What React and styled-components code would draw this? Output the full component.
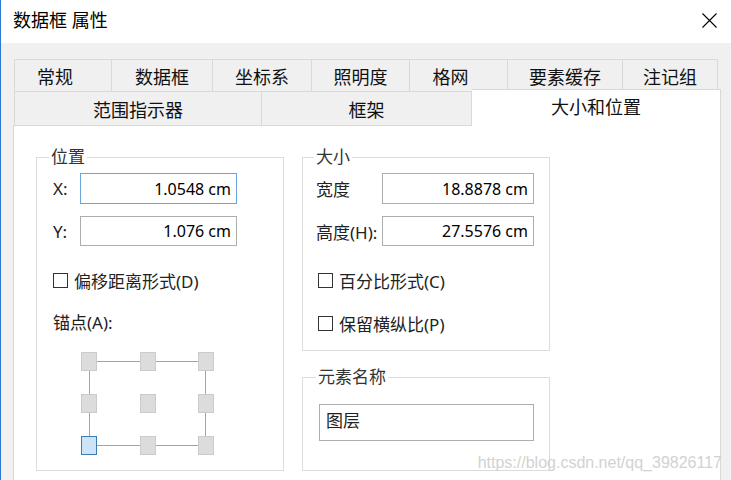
import styled, { createGlobalStyle } from "styled-components";

const GlobalStyle = createGlobalStyle`
  * { box-sizing: border-box; }
  body {
    margin: 0;
    background: #ffffff;
    font-family: "Noto Sans", "Noto Sans CJK SC", sans-serif;
  }
`;

const Window = styled.div`
  position: relative;
  width: 731px;
  height: 480px;
  overflow: hidden;
  display: flex;
  flex-direction: column;
  border-left: 1px solid #2b79d0;
  background: #ffffff;
`;

const TitleBar = styled.div`
  height: 43px;
  flex-shrink: 0;
  display: flex;
  align-items: center;
  justify-content: space-between;
  padding: 0 14px 0 12px;
  background: #ffffff;
`;

const Title = styled.div`
  font-size: 18px;
  color: #000;
  line-height: 24px;
  margin-top: -3px;
`;

const CloseIcon = styled.svg`
  width: 15px;
  height: 15px;
  margin-top: -3px;
`;

const Body = styled.div`
  flex: 1;
  display: flex;
  flex-direction: column;
  background: #f0f0f0;
  padding: 16px 0 0 12px;
`;

const TabStrip = styled.div`
  display: flex;
  flex-direction: column;
  margin-left: 1px;
`;

const TabRow = styled.div`
  display: flex;
  height: ${(p) => p.$height}px;
`;

const Tab = styled.div`
  width: ${(p) => p.$width}px;
  display: flex;
  align-items: center;
  justify-content: center;
  font-size: 18px;
  color: #111;
  background: #f0f0f0;
  border-top: 1px solid #d9d9d9;
  border-right: 1px solid #d9d9d9;
  padding-top: ${(p) => p.$padTop || 0}px;
  padding-right: ${(p) => p.$shift || 0}px;

  &:first-child {
    border-left: 1px solid #d9d9d9;
  }
`;

const ActiveTab = styled(Tab)`
  position: relative;
  z-index: 1;
  background: #ffffff;
  margin-top: -2px;
  margin-bottom: -1px;
  align-items: flex-start;
  padding-top: 3px;
`;

const Panel = styled.div`
  flex: 1;
  width: 708px;
  background: #ffffff;
  border: 1px solid #d9d9d9;
  border-bottom: none;
  padding: 19px 0 0 22px;
  display: flex;
  align-items: flex-start;
  gap: 18px;
`;

const Column = styled.div`
  display: flex;
  flex-direction: column;
  gap: 14px;
`;

const Group = styled.fieldset`
  margin: 0;
  min-width: 0;
  width: 248px;
  height: ${(p) => p.$height}px;
  border: 1px solid #dcdcdc;
  padding: ${(p) => p.$pad};
`;

const Legend = styled.legend`
  font-size: 17px;
  line-height: 24px;
  color: #333;
  padding: 0 2px;
  margin-left: ${(p) => p.$shift}px;
`;

const Fields = styled.div`
  display: flex;
  flex-direction: column;
  gap: 12px;
`;

const FieldRow = styled.div`
  display: grid;
  grid-template-columns: ${(p) => p.$labelW}px ${(p) => p.$inputW}px;
  align-items: center;
  height: ${(p) => p.$h}px;
`;

const FieldLabel = styled.span`
  font-size: 17px;
  color: #222;
  white-space: nowrap;
`;

const NumberInput = styled.input`
  height: 100%;
  width: 100%;
  margin: 0;
  border: 1px solid ${(p) => (p.$focused ? "#6aa5df" : "#adadad")};
  background: #fff;
  font-family: "Noto Sans", "Noto Sans CJK SC", sans-serif;
  font-size: 16px;
  color: #000;
  text-align: right;
  padding: 0 5px 0 4px;
  outline: none;
`;

const NameInput = styled.input`
  width: 215px;
  height: 37px;
  margin: 0;
  border: 1px solid #adadad;
  font-family: "Noto Sans", "Noto Sans CJK SC", sans-serif;
  font-size: 17px;
  color: #222;
  padding: 0 6px 6px;
  outline: none;
`;

const CheckRow = styled.label`
  display: flex;
  align-items: center;
  gap: 6px;
  height: 22px;
  margin-top: ${(p) => p.$mt}px;
  margin-left: ${(p) => p.$ml || 0}px;
  font-size: 17px;
  color: #222;
  white-space: nowrap;
`;

const CheckBox = styled.span`
  width: 15px;
  height: 15px;
  border: 1px solid #333;
  background: #fff;
  flex-shrink: 0;
`;

const PlainLabel = styled.div`
  font-size: 17px;
  line-height: 22px;
  color: #222;
  margin-top: 21px;
`;

const AnchorGrid = styled.div`
  position: relative;
  width: 133px;
  height: 103px;
  margin: 18px 0 0 28px;
  display: grid;
  grid-template-columns: 16px 16px 16px;
  grid-template-rows: 19px 19px 19px;
  justify-content: space-between;
  align-content: space-between;

  &::before {
    content: "";
    position: absolute;
    inset: 9px 8px;
    border: 1px solid #a3a3a3;
  }
`;

const AnchorPoint = styled.span`
  position: relative;
  z-index: 1;
  background: ${(p) => (p.$selected ? "#cce4f7" : "#dcdcdc")};
  border: 1px solid ${(p) => (p.$selected ? "#3d7bb0" : "#cbcbcb")};
`;

const Watermark = styled.div`
  position: absolute;
  right: 9px;
  bottom: 8px;
  font-family: "Liberation Sans", Arial, sans-serif;
  font-size: 16px;
  color: #d2d2d2;
  white-space: nowrap;
`;

const row1 = [
  ["常规", 98, 16],
  ["数据框", 101, 0],
  ["坐标系", 99, 0],
  ["照明度", 98, 0],
  ["格网", 98, 16],
  ["要素缓存", 115, 0],
  ["注记组", 95, 0],
];

function App() {
  return (
    <>
      <GlobalStyle />
      <Window>
        <TitleBar>
          <Title>数据框 属性</Title>
          <CloseIcon viewBox="0 0 15 15">
            <path d="M0.5 0.5 L14.5 14.5 M14.5 0.5 L0.5 14.5" stroke="#000" strokeWidth="1.1" fill="none" />
          </CloseIcon>
        </TitleBar>
        <Body>
          <TabStrip>
            <TabRow $height={32}>
              {row1.map(([label, w, shift]) => (
                <Tab key={label} $width={w} $shift={shift}>
                  {label}
                </Tab>
              ))}
            </TabRow>
            <TabRow $height={34}>
              <Tab $width={248} $padTop={1}>范围指示器</Tab>
              <Tab $width={210} $padTop={1}>框架</Tab>
              <ActiveTab $width={249}>大小和位置</ActiveTab>
            </TabRow>
          </TabStrip>
          <Panel>
            <Group $height={326} $pad="4px 10px 0 16px">
              <Legend $shift={-4}>位置</Legend>
              <Fields>
                <FieldRow $labelW={27} $inputW={157} $h={31}>
                  <FieldLabel>X:</FieldLabel>
                  <NumberInput $focused readOnly value="1.0548 cm" />
                </FieldRow>
                <FieldRow $labelW={27} $inputW={157} $h={30}>
                  <FieldLabel>Y:</FieldLabel>
                  <NumberInput readOnly value="1.076 cm" />
                </FieldRow>
              </Fields>
              <CheckRow $mt={23}>
                <CheckBox />
                偏移距离形式(D)
              </CheckRow>
              <PlainLabel>锚点(A):</PlainLabel>
              <AnchorGrid>
                {Array.from({ length: 9 }, (_, i) => (
                  <AnchorPoint key={i} $selected={i === 6} />
                ))}
              </AnchorGrid>
            </Group>
            <Column>
              <Group $height={206} $pad="4px 15px 0 13px">
                <Legend $shift={-2}>大小</Legend>
                <Fields>
                  <FieldRow $labelW={66} $inputW={152} $h={31}>
                    <FieldLabel>宽度</FieldLabel>
                    <NumberInput readOnly value="18.8878 cm" />
                  </FieldRow>
                  <FieldRow $labelW={66} $inputW={152} $h={30}>
                    <FieldLabel>高度(H):</FieldLabel>
                    <NumberInput readOnly value="27.5576 cm" />
                  </FieldRow>
                </Fields>
                <CheckRow $mt={23} $ml={2}>
                  <CheckBox />
                  百分比形式(C)
                </CheckRow>
                <CheckRow $mt={21} $ml={2}>
                  <CheckBox />
                  保留横纵比(P)
                </CheckRow>
              </Group>
              <Group $height={106} $pad="15px 10px 0 16px">
                <Legend $shift={-3}>元素名称</Legend>
                <NameInput readOnly value="图层" />
              </Group>
            </Column>
          </Panel>
        </Body>
        <Watermark>https://blog.csdn.net/qq_39826117</Watermark>
      </Window>
    </>
  );
}

export default App;
